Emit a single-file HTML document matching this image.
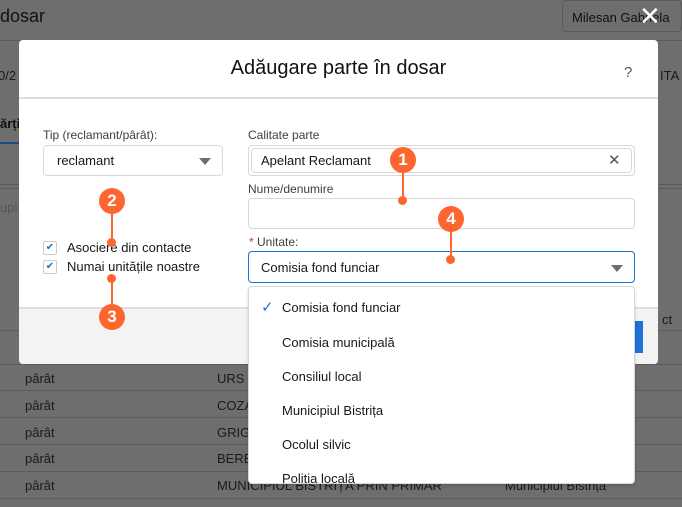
<!DOCTYPE html>
<html><head><meta charset="utf-8"><style>
*{box-sizing:border-box;margin:0;padding:0}
body{width:682px;height:507px;overflow:hidden;position:relative;background:#6e6e6e;font-family:"Liberation Sans",sans-serif;color:#181818}
.a{position:absolute}
.bgt{color:#1a1a1a;font-size:13px}
.ln{position:absolute;left:0;width:682px;height:1px;background:#5c5c5c}
.modal{position:absolute;left:19px;top:40px;width:639px;height:324px;background:#fff;border-radius:4px;overflow:hidden}
.box{position:absolute;border:1px solid #d8d8d8;border-radius:4px;background:#fff}
.lbl{position:absolute;font-size:12px;color:#3e3e3c}
.tri{position:absolute;width:0;height:0;border-left:6px solid transparent;border-right:6px solid transparent;border-top:7px solid #706e6b}
.m{position:absolute;width:26px;height:26px;border-radius:50%;background:#fe6630;color:#fff;font-weight:bold;font-size:17px;text-align:center;line-height:26px}
.ml{position:absolute;width:2px;background:#fe6630}
.md{position:absolute;width:9px;height:9px;border-radius:50%;background:#fe6630}
.cb{position:absolute;width:14px;height:14px;border:1px solid #ccc;border-radius:2px;background:#fff;color:#1b6fd6;font-size:10px;line-height:12px;text-align:center}
.it{position:absolute;left:33px;font-size:13px;color:#181818}
</style></head><body>
<div class="a" style="left:0;top:6px;font-size:18px;color:#111">dosar</div>
<div class="a" style="left:562px;top:0;width:120px;height:32px;border:1px solid #5a5a5a;border-radius:4px;font-size:13px;padding:9px 0 0 9px;color:#111">Milesan Gabriela</div>
<div class="a" style="left:639px;top:3px;color:#fff;font-size:26px;line-height:26px">✕</div>
<div class="ln" style="top:40px"></div>
<div class="a bgt" style="left:-2px;top:68px">0/2</div>
<div class="a bgt" style="left:660px;top:68px">ITA</div>
<div class="a" style="left:0;top:116px;font-size:13px;font-weight:bold;color:#111">ărți</div>
<div class="a" style="left:0;top:142px;width:19px;height:2px;background:#1b4b80"></div>
<div class="ln" style="top:184px"></div><div class="ln" style="top:188px"></div>
<div class="a bgt" style="left:0;top:200px;color:#555">upl</div>
<div class="ln" style="top:330px"></div>
<div class="a bgt" style="left:662px;top:312px">ct</div>
<div class="ln" style="top:364px"></div>
<div class="a bgt" style="left:25px;top:371px">pârât</div><div class="a bgt" style="left:217px;top:371px">URS M</div>
<div class="ln" style="top:390px"></div>
<div class="a bgt" style="left:25px;top:398px">pârât</div><div class="a bgt" style="left:217px;top:398px">COZA</div>
<div class="ln" style="top:417px"></div>
<div class="a bgt" style="left:25px;top:425px">pârât</div><div class="a bgt" style="left:217px;top:425px">GRIG</div>
<div class="ln" style="top:444px"></div>
<div class="a bgt" style="left:25px;top:451px">pârât</div><div class="a bgt" style="left:217px;top:451px">BERE</div>
<div class="ln" style="top:471px"></div>
<div class="a bgt" style="left:25px;top:478px">pârât</div>
<div class="a bgt" style="left:217px;top:478px">MUNICIPIUL BISTRIȚA PRIN PRIMAR</div>
<div class="a bgt" style="left:505px;top:478px">Municipiul Bistrița</div>
<div class="ln" style="top:498px"></div>

<div class="modal">
 <div class="a" style="left:0;top:17px;width:639px;text-align:center;font-size:20px;color:#111">Adăugare parte în dosar</div>
 <div class="a" style="left:605px;top:24px;font-size:15px;color:#555">?</div>
 <div class="a" style="left:0;top:57px;width:639px;height:2px;background:#ddd"></div>
 <div class="a" style="left:0;top:267px;width:639px;height:57px;background:#f3f3f3;border-top:2px solid #ddd"></div>
 <div class="a" style="left:605px;top:281px;width:19px;height:32px;background:#1b72d8;border-radius:4px 0 0 4px"></div>
</div>
<div class="a" style="left:642px;top:321px;width:1px;height:32px;background:#1b72d8"></div>

<div class="lbl" style="left:43px;top:128px">Tip (reclamant/pârât):</div>
<div class="box" style="left:43px;top:145px;width:180px;height:31px"><span class="a" style="left:13px;top:7px;font-size:13px">reclamant</span><div class="tri" style="left:155px;top:12px"></div></div>
<div class="lbl" style="left:248px;top:128px">Calitate parte</div>
<div class="box" style="left:248px;top:145px;width:387px;height:31px;padding:2px"><div class="box" style="left:2px;top:2px;width:381px;height:25px"></div><span class="a" style="left:12px;top:7px;font-size:13px">Apelant Reclamant</span><span class="a" style="left:359px;top:5px;font-size:15px;color:#555">✕</span></div>
<div class="lbl" style="left:248px;top:182px">Nume/denumire</div>
<div class="box" style="left:248px;top:198px;width:387px;height:31px"></div>
<div class="lbl" style="left:249px;top:235px"><span style="color:#c23934">*</span> Unitate:</div>
<div class="box" style="left:248px;top:251px;width:387px;height:32px;border-color:#1b72d8"><span class="a" style="left:12px;top:8px;font-size:13px">Comisia fond funciar</span><div class="tri" style="left:362px;top:13px"></div></div>
<div class="box" style="left:248px;top:286px;width:387px;height:198px;box-shadow:0 2px 3px rgba(0,0,0,.15);overflow:hidden">
 <span class="a" style="left:12px;top:11px;color:#1b72d8;font-size:15px">✓</span>
 <div class="it" style="top:13px">Comisia fond funciar</div>
 <div class="it" style="top:48px">Comisia municipală</div>
 <div class="it" style="top:82px">Consiliul local</div>
 <div class="it" style="top:116px">Municipiul Bistrița</div>
 <div class="it" style="top:150px">Ocolul silvic</div>
 <div class="it" style="top:184px">Poliția locală</div>
</div>
<div class="cb" style="left:43px;top:241px">✔</div><div class="a" style="left:67px;top:240px;font-size:13px">Asociere din contacte</div>
<div class="cb" style="left:43px;top:260px">✔</div><div class="a" style="left:67px;top:259px;font-size:13px">Numai unitățile noastre</div>

<div class="ml" style="left:402px;top:160px;height:40px"></div><div class="md" style="left:398px;top:196px"></div><div class="m" style="left:390px;top:147px">1</div>
<div class="ml" style="left:111px;top:201px;height:41px"></div><div class="md" style="left:107px;top:238px"></div><div class="m" style="left:99px;top:188px">2</div>
<div class="ml" style="left:111px;top:279px;height:38px"></div><div class="md" style="left:107px;top:274px"></div><div class="m" style="left:99px;top:304px">3</div>
<div class="ml" style="left:450px;top:219px;height:40px"></div><div class="md" style="left:446px;top:255px"></div><div class="m" style="left:438px;top:206px">4</div>
</body></html>
